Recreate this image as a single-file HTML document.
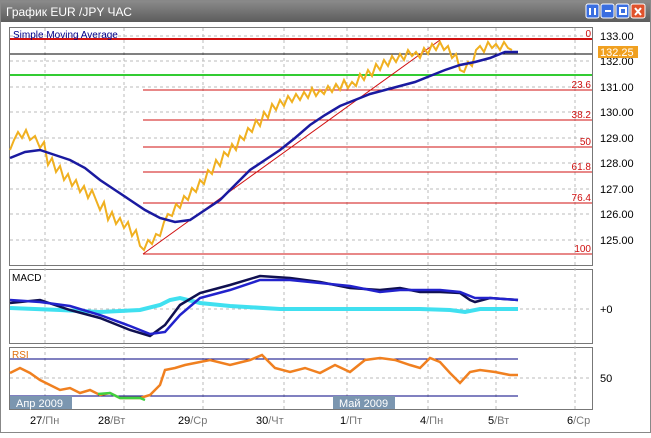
<!DOCTYPE html><html><head><style>
body{margin:0;width:651px;height:433px;overflow:hidden;background:#fff;font-family:"Liberation Sans",sans-serif}
</style></head><body>
<svg width="651" height="433" xmlns="http://www.w3.org/2000/svg" font-family="Liberation Sans, DejaVu Sans, sans-serif">
<rect x="0" y="0" width="651" height="433" fill="#fff" stroke="#888" stroke-width="2"/>
<defs><linearGradient id="tb" x1="0" y1="0" x2="0" y2="1"><stop offset="0" stop-color="#8a8a8a"/><stop offset="1" stop-color="#5c5c5c"/></linearGradient></defs>
<rect x="1" y="1" width="649" height="21" fill="url(#tb)"/>
<text x="6" y="16" font-size="12" fill="#fff">График EUR /JPY  ЧАС</text>
<g stroke="#fff" stroke-width="1">
<rect x="586" y="4" width="13" height="14" rx="2" fill="#3a6ee0"/>
<rect x="601" y="4" width="13" height="14" rx="2" fill="#3a6ee0"/>
<rect x="616" y="4" width="13" height="14" rx="2" fill="#3a6ee0"/>
<rect x="631" y="4" width="14" height="14" rx="2" fill="#e0522c"/>
</g>
<g stroke="#fff" stroke-width="2"><line x1="590" y1="8" x2="590" y2="15"/><line x1="595" y1="8" x2="595" y2="15"/><line x1="605" y1="11" x2="611" y2="11"/><rect x="620" y="8" width="6" height="6" fill="none"/><line x1="635" y1="8" x2="641" y2="15"/><line x1="641" y1="8" x2="635" y2="15"/></g>
<g fill="#fff" stroke="#777"><rect x="9.5" y="27.5" width="583" height="238"/><rect x="9.5" y="269.5" width="583" height="74"/><rect x="9.5" y="347.5" width="583" height="62"/></g>
<g stroke="#bbb" stroke-dasharray="3,3">
<line x1="45" y1="28" x2="45" y2="410"/><line x1="124" y1="28" x2="124" y2="410"/><line x1="203" y1="28" x2="203" y2="410"/><line x1="284" y1="28" x2="284" y2="410"/><line x1="347" y1="28" x2="347" y2="410"/><line x1="428" y1="28" x2="428" y2="410"/><line x1="496" y1="28" x2="496" y2="410"/><line x1="575" y1="28" x2="575" y2="410"/>
<line x1="10" y1="36" x2="592" y2="36"/><line x1="10" y1="61" x2="592" y2="61"/><line x1="10" y1="87" x2="592" y2="87"/><line x1="10" y1="112" x2="592" y2="112"/><line x1="10" y1="138" x2="592" y2="138"/><line x1="10" y1="163" x2="592" y2="163"/><line x1="10" y1="189" x2="592" y2="189"/><line x1="10" y1="214" x2="592" y2="214"/><line x1="10" y1="240" x2="592" y2="240"/>
<line x1="10" y1="309" x2="592" y2="309"/><line x1="10" y1="378" x2="592" y2="378"/>
</g>
<line x1="10" y1="39" x2="592" y2="39" stroke="#d01010" stroke-width="2"/>
<line x1="10" y1="54" x2="592" y2="54" stroke="#000" stroke-width="1"/>
<line x1="10" y1="75" x2="592" y2="75" stroke="#3c3" stroke-width="2"/>
<g stroke="#d01010"><line x1="143" y1="90" x2="592" y2="90"/><line x1="143" y1="120" x2="592" y2="120"/><line x1="143" y1="147" x2="592" y2="147"/><line x1="143" y1="172" x2="592" y2="172"/><line x1="143" y1="203" x2="592" y2="203"/><line x1="143" y1="254" x2="592" y2="254"/><line x1="143" y1="254" x2="440" y2="40"/></g>
<g font-size="10" fill="#d01010" text-anchor="end"><text x="591" y="37">0</text><text x="591" y="88">23.6</text><text x="591" y="118">38.2</text><text x="591" y="145">50</text><text x="591" y="170">61.8</text><text x="591" y="201">76.4</text><text x="591" y="252">100</text></g>
<text x="13" y="38" font-size="10" fill="#00008b">Simple  Moving  Average</text>
<polyline fill="none" stroke="#f0b020" stroke-width="2" points="10,150 14,140 18,132 22,138 26,130 30,140 35,136 40,148 44,142 48,165 52,158 56,172 60,166 64,180 68,174 72,186 76,180 80,192 84,186 88,198 92,190 96,200 100,210 104,202 108,220 112,212 116,224 120,218 124,228 128,222 132,236 136,230 140,246 144,250 148,240 152,244 156,234 160,236 164,222 168,214 172,216 176,204 180,208 184,196 188,200 192,188 196,192 200,180 204,184 208,170 212,174 216,160 220,166 224,152 228,156 232,144 236,150 240,136 244,140 248,128 252,132 256,120 260,126 264,112 268,118 272,104 276,110 280,100 284,106 288,96 292,102 296,94 300,100 304,92 308,98 312,88 316,96 320,90 324,94 328,86 332,92 336,84 340,90 344,80 348,88 352,82 356,86 360,74 364,80 368,70 372,76 376,64 380,70 384,60 388,66 392,56 396,62 400,54 404,60 408,50 412,56 416,52 420,58 424,48 428,54 432,44 436,50 440,42 444,50 448,46 452,58 456,54 460,70 464,72 468,62 472,66 476,50 480,46 484,52 488,42 492,48 496,44 500,50 504,42 508,48 512,50"/>
<polyline fill="none" stroke="#1a1aa0" stroke-width="2.5" points="10,158 25,152 40,150 55,155 70,160 85,168 100,180 115,190 130,200 145,210 160,218 175,222 190,220 205,210 220,200 235,185 250,170 265,160 280,150 295,138 310,125 325,115 340,106 355,100 370,94 385,90 400,86 415,82 430,76 445,70 460,65 475,62 490,58 505,52 518,52"/>
<g font-size="11" fill="#000"><text x="600" y="40">133.00</text><text x="600" y="65">132.00</text><text x="600" y="91">131.00</text><text x="600" y="116">130.00</text><text x="600" y="142">129.00</text><text x="600" y="167">128.00</text><text x="600" y="193">127.00</text><text x="600" y="218">126.00</text><text x="600" y="244">125.00</text></g>
<rect x="598" y="46" width="40" height="12" fill="#f0a020"/><text x="600" y="56" font-size="11" fill="#fff">132.25</text>
<text x="12" y="281" font-size="10" fill="#000">MACD</text>
<polyline fill="none" stroke="#40e0f0" stroke-width="4" points="10,308 60,310 100,312 140,310 160,305 170,300 180,298 200,303 230,306 280,309 350,309 420,309 450,310 465,312 480,309 518,309"/>
<polyline fill="none" stroke="#101050" stroke-width="2.5" points="10,303 40,300 70,310 100,318 130,330 150,336 165,325 180,305 200,293 230,285 260,276 290,278 320,282 350,288 380,290 400,288 420,292 440,292 460,293 470,300 475,302 490,298 518,300"/>
<polyline fill="none" stroke="#2222cc" stroke-width="2.5" points="10,300 40,302 70,306 100,315 130,326 150,334 165,332 180,315 200,298 230,290 260,280 290,280 320,283 350,286 380,292 400,290 420,290 440,290 460,292 475,298 490,298 518,300"/>
<text x="600" y="313" font-size="11" fill="#000">+0</text>
<g stroke="#000080"><line x1="10" y1="359" x2="518" y2="359"/><line x1="10" y1="396" x2="518" y2="396"/></g>
<text x="12" y="358" font-size="10" fill="#e07010">RSI</text>
<polyline fill="none" stroke="#f08020" stroke-width="2.5" points="10,373 20,368 30,373 40,380 50,385 60,390 70,388 80,393 90,390 100,395 110,393 120,398 130,398 140,398 150,395 160,385 165,370 175,368 185,365 195,363 210,360 230,365 250,360 262,355 275,368 290,372 305,368 320,373 335,365 350,372 365,360 380,358 395,360 410,365 420,368 430,358 440,362 450,373 460,383 470,372 480,370 495,372 510,375 518,375"/>
<polyline fill="none" stroke="#40d040" stroke-width="2.5" points="98,394 110,393 120,398 130,398 140,398 145,400"/>
<rect x="10" y="396" width="62" height="13" fill="#7b96b0"/><text x="16" y="407" font-size="11" fill="#fff">Апр 2009</text>
<rect x="333" y="396" width="62" height="13" fill="#7b96b0"/><text x="339" y="407" font-size="11" fill="#fff">Май 2009</text>
<text x="600" y="382" font-size="11" fill="#000">50</text>
<g font-size="11" fill="#000"><text x="30" y="424">27<tspan fill="#777">/Пн</tspan></text><text x="98" y="424">28<tspan fill="#777">/Вт</tspan></text><text x="178" y="424">29<tspan fill="#777">/Ср</tspan></text><text x="256" y="424">30<tspan fill="#777">/Чт</tspan></text><text x="340" y="424">1<tspan fill="#777">/Пт</tspan></text><text x="420" y="424">4<tspan fill="#777">/Пн</tspan></text><text x="488" y="424">5<tspan fill="#777">/Вт</tspan></text><text x="567" y="424">6<tspan fill="#777">/Ср</tspan></text></g>
</svg>
</body></html>
